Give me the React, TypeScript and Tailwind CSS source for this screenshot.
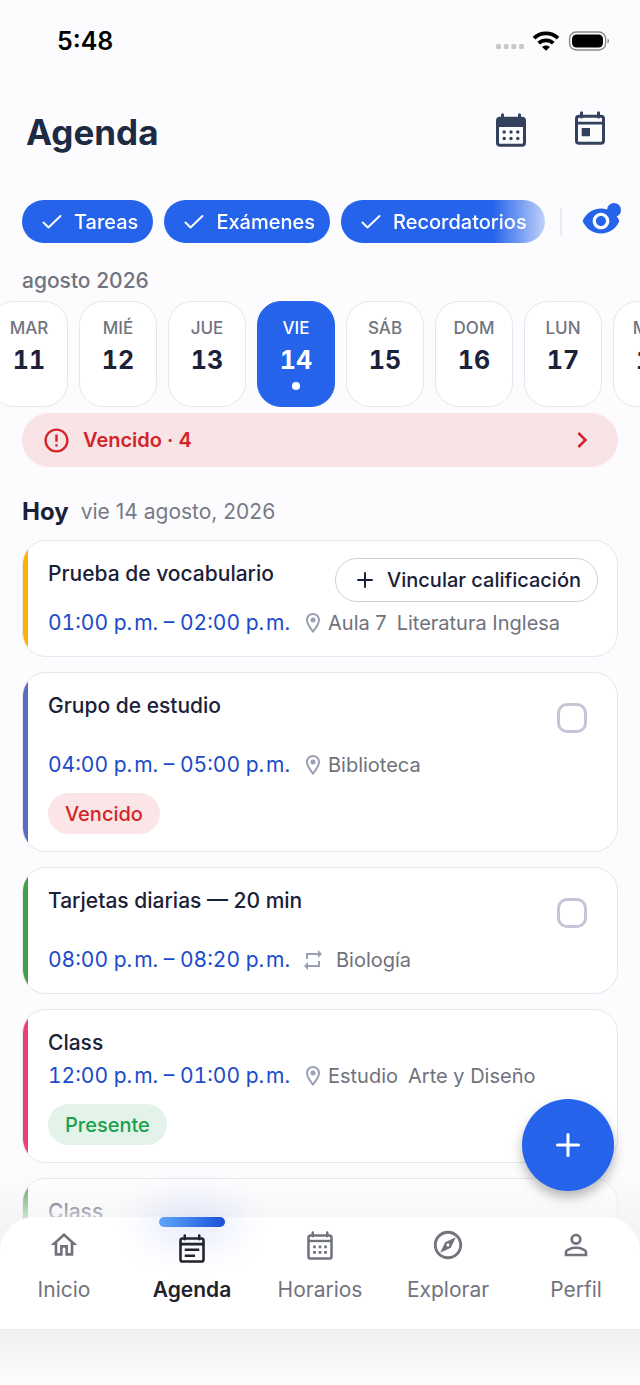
import { useState } from "react";
import type { ReactNode } from "react";
import {
  MdChevronRight,
  MdErrorOutline,
  MdOutlineExplore,
  MdOutlineHome,
  MdOutlineLocationOn,
  MdPersonOutline,
  MdRepeat,
  MdVisibility,
} from "react-icons/md";

interface AgendaItem {
  id: number;
  title: string;
  time: string;
  color: string;
  place?: string;
  subject?: string;
  repeats?: boolean;
  action?: string;
  checkable?: boolean;
  status?: "Vencido" | "Presente";
}

const filters = ["Tareas", "Exámenes", "Recordatorios"];

const days = [
  { name: "MAR", day: 11 },
  { name: "MIÉ", day: 12 },
  { name: "JUE", day: 13 },
  { name: "VIE", day: 14 },
  { name: "SÁB", day: 15 },
  { name: "DOM", day: 16 },
  { name: "LUN", day: 17 },
  { name: "MAR", day: 18 },
];

const items: AgendaItem[] = [
  { id: 1, title: "Prueba de vocabulario", time: "01:00 p.\u200am. – 02:00 p.\u200am.", color: "bg-[#fdb105]", place: "Aula 7", subject: "Literatura Inglesa", action: "Vincular calificación" },
  { id: 2, title: "Grupo de estudio", time: "04:00 p.\u200am. – 05:00 p.\u200am.", color: "bg-[#5c6bc0]", place: "Biblioteca", checkable: true, status: "Vencido" },
  { id: 3, title: "Tarjetas diarias — 20 min", time: "08:00 p.\u200am. – 08:20 p.\u200am.", color: "bg-[#43a047]", subject: "Biología", repeats: true, checkable: true },
  { id: 4, title: "Class", time: "12:00 p.\u200am. – 01:00 p.\u200am.", color: "bg-[#ec407a]", place: "Estudio", subject: "Arte y Diseño", status: "Presente" },
  { id: 5, title: "Class", time: "02:00 p.\u200am. – 03:00 p.\u200am.", color: "bg-[#43a047]" },
];

function CalendarFrame({ className, children }: { className: string; children: ReactNode }) {
  return (
    <svg className={className} viewBox="0 0 30 34" fill="currentColor">
      <rect x="1.500" y="5.300" width="27" height="27" rx="2.500" fill="none" stroke="currentColor" strokeWidth="3" />
      <path d="M6.500 6V1.800M23.500 6V1.800" stroke="currentColor" strokeWidth="3" strokeLinecap="round" />
      {children}
    </svg>
  );
}

function MonthIcon() {
  return (
    <CalendarFrame className="h-[34px] w-[30px]">
      <path d="M1 6h28v8H1z" />
      {[8.2, 15, 21.8].map((x) => (
        <g key={x}>
          <circle cx={x} cy="19" r="1.700" />
          <circle cx={x} cy="25.500" r="1.700" />
        </g>
      ))}
    </CalendarFrame>
  );
}

function TodayIcon() {
  return (
    <CalendarFrame className="h-[34px] w-[30px]">
      <path d="M2 10.800h26v2.600H2zM6.700 17h8.300v8.300H6.700z" />
    </CalendarFrame>
  );
}

function ScheduleIcon() {
  return (
    <CalendarFrame className="h-[29px] w-[26px]">
      <path d="M2 10.300h26v2.800H2z" />
      {[8.5, 15, 21.5].map((x) => (
        <path key={x} d={`M${x - 1.6} 17h3.200v3.200h-3.200zM${x - 1.6} 23.500h3.200v3.200h-3.200z`} />
      ))}
    </CalendarFrame>
  );
}

function AgendaIcon() {
  return (
    <CalendarFrame className="h-[29px] w-[26px]">
      <path d="M2 10.300h26v3.200H2zM6.500 17h17v3h-17zM6.500 24h12v3h-12z" />
    </CalendarFrame>
  );
}

const tabs = [
  { label: "Inicio", icon: <MdOutlineHome className="size-8" /> },
  { label: "Agenda", icon: <AgendaIcon /> },
  { label: "Horarios", icon: <ScheduleIcon /> },
  { label: "Explorar", icon: <MdOutlineExplore className="size-[34px]" /> },
  { label: "Perfil", icon: <MdPersonOutline className="size-[34px]" /> },
];

function StatusBar() {
  return (
    <div className="flex h-20 items-center justify-between pt-px pr-[30px] pl-[57px]">
      <span className="text-[25px] leading-8 font-semibold text-black">5:48</span>
      <div className="flex items-center gap-2">
        <svg className="mt-3 h-2 w-7" viewBox="0 0 28 8" fill="#c8c8ca">
          <rect x="0" y="1" width="5" height="5" rx="1.500" />
          <rect x="7.700" y="1" width="5" height="5" rx="1.500" />
          <rect x="15.300" y="1" width="5" height="5" rx="1.500" />
          <rect x="23" y="1" width="5" height="5" rx="1.500" />
        </svg>
        <svg className="h-5 w-7" viewBox="0 0 28 20" fill="none" stroke="#000" strokeWidth="3.800">
          <path d="M2 7.200C8.600 .8 19.400 .8 26 7.200" />
          <path d="M6.700 12.200c4-3.900 10.600-3.900 14.600 0" />
          <path d="M14 19.800l-3.900-3.900c2.200-2 5.600-2 7.800 0z" fill="#000" stroke="none" />
        </svg>
        <svg className="h-5 w-[42px]" viewBox="0 0 42 20">
          <rect x="1.600" y="1" width="36" height="18" rx="6.500" fill="none" stroke="#8a8a8c" strokeWidth="1.400" />
          <rect x="4" y="3.400" width="31" height="13.200" rx="4.500" fill="#000" />
          <path d="M39.500 7.500c2 .8 2 4.200 0 5z" fill="#8a8a8c" />
        </svg>
      </div>
    </div>
  );
}

function CheckMark() {
  return (
    <svg className="size-5" viewBox="0 0 20 20" fill="none" stroke="currentColor" strokeWidth="1.900" strokeLinecap="round" strokeLinejoin="round">
      <path d="M1.500 10.500l5 5L18.500 4" />
    </svg>
  );
}

function PlusMark({ className }: { className: string }) {
  return (
    <svg className={className} viewBox="0 0 24 24" fill="none" stroke="currentColor" strokeWidth="3" strokeLinecap="round">
      <path d="M12 1.500v21M1.500 12h21" />
    </svg>
  );
}

function ItemCard({ item }: { item: AgendaItem }) {
  const [done, setDone] = useState(false);
  const titleHeight = item.action ? "h-[49px]" : item.checkable ? "h-[59px]" : "h-[33px]";

  return (
    <li className="flex overflow-hidden rounded-3xl border border-[#e6e7eb] bg-white">
      <span className={`w-[5px] shrink-0 ${item.color}`} />
      <div className="min-w-0 flex-1 py-[17px] pr-[19px] pl-5">
        <div className={`flex items-start justify-between ${titleHeight}`}>
          <h3 className="text-[21px] leading-8 font-medium text-[#1a2138]">{item.title}</h3>
          {item.action && (
            <button className="flex h-11 items-center gap-[14px] rounded-full border border-[#cfd0d6] pr-4 pl-[21px] text-[20px] font-medium whitespace-nowrap text-[#1a2138]">
              <PlusMark className="size-4" />
              {item.action}
            </button>
          )}
          {item.checkable && (
            <input
              type="checkbox"
              aria-label={item.title}
              checked={done}
              onChange={() => setDone(!done)}
              className="mt-[13px] mr-[11px] size-[30px] appearance-none rounded-[10px] border-[3px] border-[#c5c5d8] checked:bg-[#2563eb]"
            />
          )}
        </div>
        <div className="flex h-8 items-center text-[20px] whitespace-nowrap text-[#6f727d]">
          <time className="w-[253px] text-[21px] text-[#1a4bc9] tabular-nums">{item.time}</time>
          {item.place && <MdOutlineLocationOn className="mr-[3px] size-6 text-[#9a9fb3]" />}
          {item.repeats && <MdRepeat className="mr-[11px] size-6 text-[#9a9fb3]" />}
          {item.place && <span className="mr-[10px]">{item.place}</span>}
          {item.subject && <span>{item.subject}</span>}
        </div>
        {item.status && (
          <div className="mt-3 flex">
            <span
              className={`flex h-[41px] items-center rounded-full px-[17px] text-[20px] font-medium ${
                item.status === "Vencido" ? "bg-[#fbe5e6] text-[#d32529]" : "bg-[#e3f3e9] text-[#1aa14b]"
              }`}
            >
              {item.status}
            </span>
          </div>
        )}
      </div>
    </li>
  );
}

export default function App() {
  const [activeTab, setActiveTab] = useState("Agenda");
  const [activeDay, setActiveDay] = useState(14);

  return (
    <div className="relative flex h-screen flex-col overflow-hidden bg-[#fcfcff] font-[Inter,sans-serif]">
      <StatusBar />
      <header className="flex h-[104px] items-center justify-between pr-[35px] pl-[26px]">
        <h1 className="text-[35px] leading-10 font-bold text-[#1c2a43]">Agenda</h1>
        <div className="flex items-start gap-[49px] pb-1.5 text-[#33415c]">
          <button aria-label="Mes" className="pt-0.5">
            <MonthIcon />
          </button>
          <button aria-label="Hoy">
            <TodayIcon />
          </button>
        </div>
      </header>

      <div className="mt-4 flex items-center pr-[19px] pl-[22px]">
        <div className="flex min-w-0 flex-1 gap-[11px] overflow-hidden mask-r-from-[calc(100%-52px)] mask-r-to-[calc(100%+20px)]">
          {filters.map((filter) => (
            <button
              key={filter}
              className="flex h-[43px] shrink-0 items-center gap-3 rounded-full bg-[#2563eb] pr-[15px] pl-5 text-[20px] font-medium text-white last:grow"
            >
              <CheckMark />
              {filter}
            </button>
          ))}
        </div>
        <span className="mr-[19px] ml-[15px] h-7 w-0.5 bg-[#ebebf0]" />
        <button aria-label="Visibilidad" className="relative pb-0.5 text-[#2563eb]">
          <MdVisibility className="size-10" />
          <span className="absolute top-0.5 right-0 size-3.5 rounded-full bg-[#2563eb]" />
        </button>
      </div>

      <p className="mt-[22px] px-[22px] text-[21px] leading-8 font-medium text-[#71747e]">agosto 2026</p>

      <div className="mt-1 -ml-[10px] flex shrink-0 gap-[11px] overflow-hidden">
        {days.map(({ name, day }) => (
          <button
            key={day}
            onClick={() => setActiveDay(day)}
            className={`flex h-[106px] w-[78px] shrink-0 flex-col items-center rounded-3xl border pt-[14px] ${
              day === activeDay ? "border-[#2563eb] bg-[#2563eb] text-white" : "border-[#e6e7eb] bg-white text-[#1a2138]"
            }`}
          >
            <span className={`text-[17px] leading-6 font-medium ${day === activeDay ? "" : "text-[#71747e]"}`}>{name}</span>
            <span className="pt-0.5 text-[25px] leading-9 font-bold tabular-nums">{day}</span>
            {day === activeDay && <span className="mt-1 size-2 rounded-full bg-white" />}
          </button>
        ))}
      </div>

      <main className="min-h-0 flex-1 px-[22px] pt-[6px]">
        <button className="flex h-[54px] w-full items-center gap-3 rounded-full bg-[#f8e4e6] px-5 text-[20px] font-semibold text-[#d32529]">
          <MdErrorOutline className="size-[29px]" />
          Vencido · 4
          <MdChevronRight className="ml-auto size-8" />
        </button>
        <h2 className="mt-[27px] mb-[10px] flex h-9 items-center gap-3 text-[24px] font-bold text-[#1a2138]">
          Hoy
          <span className="text-[21px] font-normal text-[#777a84]">vie 14 agosto, 2026</span>
        </h2>
        <ul className="flex flex-col gap-[15px]">
          {items.map((item) => (
            <ItemCard key={item.id} item={item} />
          ))}
        </ul>
      </main>

      <div className="absolute inset-x-0 bottom-0">
        <button
          aria-label="Añadir"
          className="absolute -top-[118px] right-[26px] z-10 flex size-[92px] items-center justify-center rounded-full bg-[#2563eb] text-white shadow-[0_6px_12px_rgba(0,0,0,0.28)]"
        >
          <PlusMark className="size-6" />
        </button>
        <div className="absolute inset-x-0 -top-[44px] h-24 bg-linear-to-b from-[#f4f4f6]/0 to-[#f4f4f6] to-60%" />
        <nav className="relative flex h-28 items-stretch rounded-t-[34px] bg-white">
          {tabs.map(({ label, icon }) => (
            <button
              key={label}
              onClick={() => setActiveTab(label)}
              className={`relative flex flex-1 flex-col items-center text-[21px] ${
                label === activeTab ? "pt-[3px] font-semibold text-[#22222e]" : "text-[#71747e]"
              }`}
            >
              {label === activeTab && (
                <>
                  <span className="absolute top-1 h-1 w-14 rounded-full shadow-[0_0_36px_14px_rgba(67,97,238,0.16)]" />
                  <span className="absolute top-0 h-2.5 w-[66px] rounded-full bg-linear-to-r from-[#60a5fa] to-[#1d4ed8]" />
                </>
              )}
              <span className="relative flex h-14 shrink-0 items-center">{icon}</span>
              <span className="absolute top-[57px] leading-8">{label}</span>
            </button>
          ))}
        </nav>
        <div className="h-14 bg-linear-to-b from-[#f0f0f0] to-[#fefefe]" />
      </div>
    </div>
  );
}
